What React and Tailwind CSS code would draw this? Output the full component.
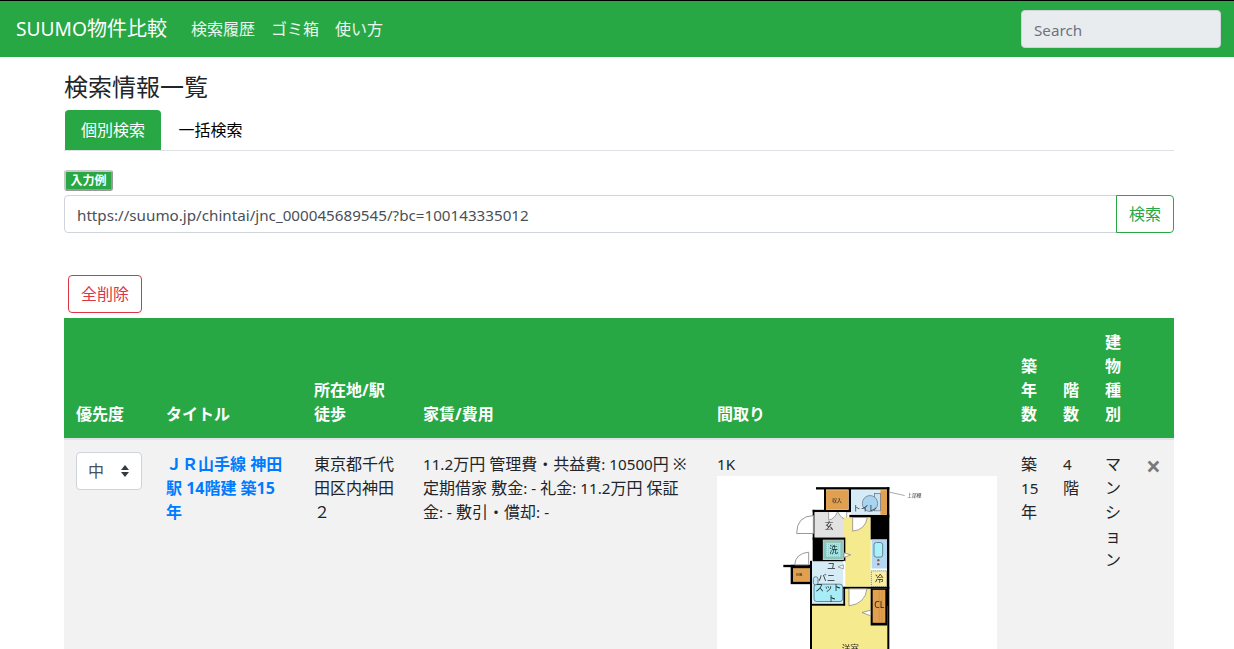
function FloorPlan() {
  const jp = "'Noto Sans CJK JP',sans-serif";
  return (
    <svg viewBox="51 108 840 680" className="block w-[280px] h-[227px] bg-white blur-[0.3px]" xmlns="http://www.w3.org/2000/svg">
      <defs>
        <pattern id="dots" width="6" height="6" patternUnits="userSpaceOnUse">
          <circle cx="2" cy="2" r="1" fill="#3f7f7f" />
        </pattern>
      </defs>
      {/* walls */}
      <rect x="348" y="141" width="220" height="7" fill="#000" />
      <rect x="561" y="141" width="7" height="640" fill="#000" />
      <rect x="372" y="145" width="6" height="66" fill="#000" />
      <rect x="338" y="209" width="114" height="7" fill="#000" />
      <rect x="338" y="209" width="6" height="90" fill="#000" />
      <rect x="446" y="145" width="7" height="70" fill="#000" />
      <rect x="448" y="224" width="120" height="8" fill="#000" />
      {/* storage */}
      <rect x="378" y="150" width="67" height="58" fill="#e0a050" />
      <text x="411" y="186" fontSize="14" textAnchor="middle" fill="#222" fontFamily={jp}>収入</text>
      {/* toilet */}
      <rect x="453" y="150" width="88" height="72" fill="#d5ecf7" />
      <rect x="541" y="150" width="20" height="74" fill="#e0a050" />
      <rect x="523" y="160" width="18" height="52" fill="#c8e2f0" stroke="#667" strokeWidth="2" />
      <ellipse cx="510" cy="190" rx="23" ry="24" fill="#a8d4ef" stroke="#667" strokeWidth="2" />
      <text x="494" y="212" fontSize="24" textAnchor="middle" fill="#222" fontFamily={jp}>トイレ</text>
      {/* entry */}
      <rect x="344" y="216" width="88" height="75" fill="#e2e2e2" />
      <path d="M386 216v24q18-4 26-24M440 216v22q-16-2-26-22" fill="#fff" stroke="#777" strokeWidth="2" />
      <text x="387" y="267" fontSize="26" textAnchor="middle" fill="#222" fontFamily={jp}>玄</text>
      <path d="M340 226q-50 2-50 54h50z" fill="#fff" stroke="#999" strokeWidth="3" />
      {/* hallway */}
      <rect x="432" y="232" width="80" height="208" fill="#f5ea8d" />
      <path d="M458 232v41q38-4 44-41z" fill="#fff" stroke="#777" strokeWidth="2" />
      {/* kitchen block */}
      <rect x="512" y="230" width="50" height="68" fill="#000" />
      <rect x="515" y="298" width="46" height="87" fill="#b5d8f2" />
      <rect x="522" y="307" width="26" height="44" rx="7" fill="#a8f0fa" stroke="#456" strokeWidth="2" />
      <circle cx="535" cy="360" r="3.5" fill="#855" />
      <circle cx="535" cy="372" r="3.5" fill="#855" />
      <rect x="514" y="392" width="46" height="47" fill="#f7ef9e" stroke="#333" strokeWidth="2" strokeDasharray="3 3" />
      <text x="538" y="426" fontSize="26" textAnchor="middle" fill="#222" fontFamily={jp}>冷</text>
      {/* washer */}
      <rect x="338" y="292" width="98" height="72" fill="#000" />
      <rect x="370" y="300" width="60" height="58" fill="#8fc5b5" stroke="#ccc" strokeWidth="3" />
      <rect x="378" y="308" width="44" height="42" fill="#a9e9e9" />
      <rect x="378" y="308" width="44" height="42" fill="url(#dots)" />
      <text x="401" y="339" fontSize="26" textAnchor="middle" fill="#222" fontFamily={jp}>洗</text>
      <path d="M432 338l20 6-20 8z" fill="#fff" stroke="#777" strokeWidth="2" />
      {/* MB */}
      <rect x="250" y="374" width="85" height="7" fill="#000" />
      <rect x="272" y="374" width="60" height="58" fill="#000" />
      <rect x="279" y="384" width="51" height="41" fill="#e0a050" />
      <text x="298" y="408" fontSize="12" textAnchor="middle" fill="#222">MB</text>
      <path d="M326 336q-40 4-42 38h42z" fill="#fff" stroke="#999" strokeWidth="3" />
      {/* unit bath */}
      <rect x="330" y="362" width="6" height="420" fill="#000" />
      <rect x="336" y="364" width="94" height="128" fill="#d5ecf7" />
      <rect x="430" y="362" width="6" height="78" fill="#fff" />
      <path d="M430 374l-16 6 16 6z" fill="#fff" stroke="#777" strokeWidth="2" />
      <text x="394" y="388" fontSize="26" textAnchor="middle" fill="#222" fontFamily={jp}>ユ</text>
      <text x="380" y="422" fontSize="26" textAnchor="middle" fill="#222" fontFamily={jp}>バニ</text>
      <rect x="342" y="432" width="86" height="52" rx="8" fill="#a8ecf7" stroke="#456" strokeWidth="2" />
      <rect x="340" y="410" width="14" height="24" rx="6" fill="#bfe8f5" stroke="#456" strokeWidth="2" />
      <text x="385" y="454" fontSize="26" textAnchor="middle" fill="#222" fontFamily={jp}>スット</text>
      <text x="396" y="486" fontSize="26" textAnchor="middle" fill="#222" fontFamily={jp}>ト</text>
      {/* mid walls */}
      <rect x="430" y="440" width="138" height="6" fill="#000" />
      <rect x="336" y="491" width="100" height="6" fill="#000" />
      <rect x="430" y="440" width="6" height="57" fill="#000" />
      {/* room */}
      <rect x="336" y="497" width="226" height="290" fill="#f5ea8d" />
      <rect x="436" y="446" width="76" height="60" fill="#f5ea8d" />
      <path d="M447 446v51q48-6 54-51z" fill="#fff" stroke="#777" strokeWidth="2" />
      {/* closet */}
      <rect x="512" y="446" width="50" height="110" fill="#000" />
      <rect x="518" y="449" width="38" height="99" fill="#e0a050" />
      <path d="M538 450v96M546 450v96" stroke="#c47b2b" strokeWidth="2" strokeDasharray="3 3" />
      <text x="538" y="505" fontSize="26" textAnchor="middle" fill="#222">CL</text>
      <path d="M512 510l-26 7 26 10z" fill="#fff" stroke="#777" strokeWidth="2" />
      <text x="451" y="636" fontSize="26" textAnchor="middle" fill="#222" fontFamily={jp}>洋室</text>
      {/* note */}
      <path d="M568 156l46 10" stroke="#555" strokeWidth="1.5" />
      <text x="643" y="172" fontSize="14" textAnchor="middle" fill="#333" fontFamily={jp}>上部棚</text>
    </svg>
  );
}

function L({ children }) {
  return <span className="text-[15.2px]">{children}</span>;
}

export default function App() {
  return (
    <div className="h-screen overflow-hidden bg-white text-[16px] leading-6 text-[#212529] font-['Noto_Sans','Noto_Sans_CJK_JP',sans-serif]">
      <nav className="h-[57px] border-t border-black bg-[#28a745] flex items-center pl-4 pr-[13px]">
        <a className="text-[20px] text-white mr-[24px]"><span className="text-[19.2px]">SUUMO</span>物件比較</a>
        <div className="flex gap-4 text-white/90">
          <a>検索履歴</a>
          <a>ゴミ箱</a>
          <a>使い方</a>
        </div>
        <input
          placeholder="Search"
          className="ml-auto w-[200px] h-[38px] px-3 pt-[2px] text-[15.2px] rounded border border-[#ced4da] bg-[#e9ecef] placeholder:text-[#6c757d] outline-none"
        />
      </nav>

      <main className="px-[64px] w-[1238px]">
        <h3 className="pt-[15px] text-[24px] leading-[29px] font-normal">検索情報一覧</h3>
        <div className="mt-[9px] flex border-b border-[#dee2e6] h-[41px]">
          <a className="ml-[1px] w-[96px] h-[40px] flex items-center justify-center bg-[#28a745] text-white rounded-t">個別検索</a>
          <a className="w-[99px] h-[40px] flex items-center justify-center text-black">一括検索</a>
        </div>

        <div className="w-[49px] h-[21px] mt-[19px] rounded-[3px] border-2 border-t-[#c8c8c8] border-l-[#c8c8c8] border-r-[#9a9a9a] border-b-[#9a9a9a] bg-[#28a745] flex items-center justify-center text-[12px] leading-none font-bold text-white">
          入力例
        </div>
        <div className="mt-[4px] flex w-[1110px] h-[38px]">
          <input
            readOnly
            value="https://suumo.jp/chintai/jnc_000045689545/?bc=100143335012"
            className="flex-1 min-w-0 px-3 pt-[2px] text-[15.2px] rounded-l border border-[#ced4da] text-[#495057] outline-none"
          />
          <button className="w-[58px] -ml-px rounded-r border border-[#28a745] text-[#28a745] bg-white">検索</button>
        </div>

        <button className="block mt-[42px] ml-[4px] w-[74px] h-[38px] rounded border border-[#dc3545] text-[#dc3545] bg-white">全削除</button>

        <table className="mt-[5px] w-[1110px] table-fixed border-collapse">
          <colgroup>
            <col className="w-[90px]" />
            <col className="w-[148px]" />
            <col className="w-[109px]" />
            <col className="w-[294px]" />
            <col className="w-[304px]" />
            <col className="w-[42px]" />
            <col className="w-[42px]" />
            <col className="w-[42px]" />
            <col className="w-[39px]" />
          </colgroup>
          <thead className="bg-[#28a745] text-white">
            <tr className="border-b-2 border-[#dee2e6] text-left align-bottom font-bold">
              <th className="p-3">優先度</th>
              <th className="p-3">タイトル</th>
              <th className="p-3">所在地/駅徒歩</th>
              <th className="p-3">家賃/費用</th>
              <th className="p-3">間取り</th>
              <th className="p-3">築年数</th>
              <th className="p-3">階数</th>
              <th className="p-3">建物種別</th>
              <th className="p-3"></th>
            </tr>
          </thead>
          <tbody className="bg-[#f2f2f2]">
            <tr className="align-top">
              <td className="p-3">
                <div className="w-[66px] h-[38px] bg-white border border-[#ced4da] rounded flex items-center pl-[11px] pr-[11px] justify-between text-[#495057]">
                  <span>中</span>
                  <svg width="10" height="14" viewBox="0 0 10 14" fill="#343a40"><path d="M5 1l4 5H1zM5 13L1 8h8z" /></svg>
                </div>
              </td>
              <td className="p-3 font-bold text-[#007bff]"><a>ＪＲ山手線 神田駅 14階建 築15年</a></td>
              <td className="p-3">東京都千代田区内神田２</td>
              <td className="p-3"><L>11.2</L>万円 管理費・共益費<L>: 10500</L>円 ※定期借家 敷金<L>: -</L> 礼金<L>: 11.2</L>万円 保証金<L>: -</L> 敷引・償却<L>: -</L></td>
              <td className="p-3">
                <L>1K</L>
                <FloorPlan />
              </td>
              <td className="p-3">築<L>15</L>年</td>
              <td className="p-3"><L>4</L>階</td>
              <td className="p-3">マンション</td>
              <td className="pl-[11px] pr-0 py-3">
                <span className="block text-[26px] leading-[28px] font-bold text-black/50">×</span>
              </td>
            </tr>
          </tbody>
        </table>
      </main>
    </div>
  );
}
